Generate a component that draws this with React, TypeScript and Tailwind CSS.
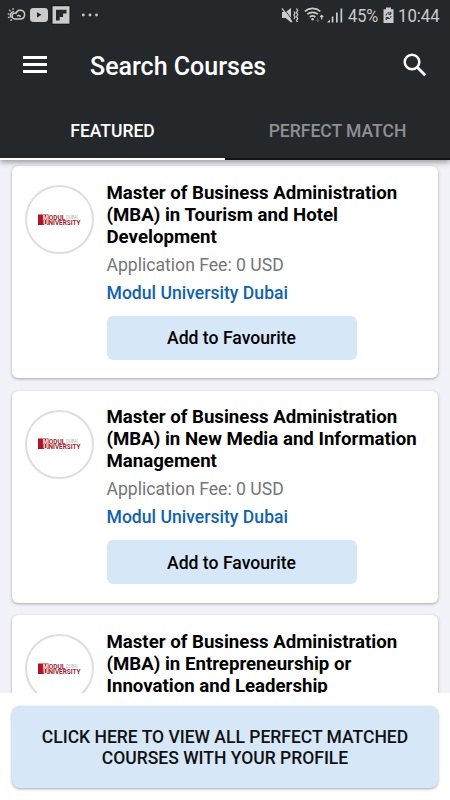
import { useState } from "react";

type Course = {
  id: number;
  title: string[];
  fee: string;
  university: string;
};

const courses: Course[] = [
  {
    id: 1,
    title: ["Master of Business Administration", "(MBA) in Tourism and Hotel", "Development"],
    fee: "0 USD",
    university: "Modul University Dubai",
  },
  {
    id: 2,
    title: ["Master of Business Administration", "(MBA) in New Media and Information", "Management"],
    fee: "0 USD",
    university: "Modul University Dubai",
  },
  {
    id: 3,
    title: ["Master of Business Administration", "(MBA) in Entrepreneurship or", "Innovation and Leadership"],
    fee: "0 USD",
    university: "Modul University Dubai",
  },
];

const tabs = ["FEATURED", "PERFECT MATCH"];

const StatusBar = () => (
  <div className="flex h-8 items-center text-[#c9cbcc]">
    <svg width="110" height="32" viewBox="0 0 110 32" fill="none">
      {/* weather */}
      <g stroke="currentColor" strokeWidth="1.5" strokeLinecap="round">
        <path d="M14.5 19h5.700a4.400 4.400 0 1 0-4.200-5.800 3 3 0 1 0-1.500 5.800" />
        <path d="M17.500 15.800c1-.6 2.200-.4 2.800.6" />
        <path d="M13.300 11.600a3.800 3.800 0 0 0-2.300 5.600" />
        <path d="M13 8.700v.5M9.600 10.400l.4.4M8.300 14h.5M8.600 17.500l.4-.2M11 20.300l.3-.4" />
      </g>
      {/* video */}
      <rect x="30" y="8" width="18" height="14" rx="3.4" fill="currentColor" />
      <path d="M37 12.2v5.2l4.6-2.6z" fill="#24282b" />
      {/* flipboard */}
      <rect x="51.500" y="5.200" width="19" height="19.500" fill="#111416" />
      <rect x="52.500" y="6.200" width="17" height="17.500" fill="currentColor" />
      <path d="M56 9.700h10.500v3.700h-3.400v3.500h-3.400v3.500H56z" fill="#24282b" />
      <circle cx="83.3" cy="15" r="1.4" fill="currentColor" />
      <circle cx="90" cy="15" r="1.4" fill="currentColor" />
      <circle cx="96.5" cy="15" r="1.4" fill="currentColor" />
    </svg>
    <svg className="ml-[170px] shrink-0" width="65" height="32" viewBox="280 0 65 32" fill="none">
      {/* muted */}
      <path d="M282 12h3.600l5.400-4v14.400l-5.400-4.400H282z" fill="currentColor" />
      <path d="M283.300 7.800l9.500 13" stroke="#24282b" strokeWidth=".8" />
      <path d="M282 8.300l10 13.700" stroke="currentColor" strokeWidth="1.300" />
      <path d="M294 11.500l1 1.500-1 2 1 2-1 2M296.500 8.500l1.200 2-1.200 2 1.200 2-1.200 2 1.200 2-1.200 2 1 1.500" stroke="currentColor" strokeWidth="1.300" />
      {/* wifi */}
      <g stroke="currentColor" strokeWidth="1.700">
        <path d="M304.800 11.300a12 12 0 0 1 15.600 0" />
        <path d="M307.300 14.200a8.300 8.300 0 0 1 10.600 0" />
        <path d="M309.800 17a4.400 4.400 0 0 1 5.600 0" />
      </g>
      <circle cx="312.600" cy="19.300" r="1.300" fill="currentColor" />
      <path d="M317.800 18v4M316.500 20.300l1.300 1.500 1.300-1.500" stroke="#686c6f" />
      <path d="M321.700 19.500v-4M320.200 17l1.500-1.700 1.500 1.700" stroke="currentColor" strokeWidth="1.200" />
      {/* signal */}
      <path d="M327 22.500l3-3v3zM331.700 16.500h1.700v6h-1.700zM336 12.500h1.700v10H336zM340.500 8.500h1.700v14h-1.700z" fill="currentColor" />
    </svg>
    <div className="ml-[3px] w-[30px] shrink-0">
      <span className="inline-block origin-left scale-x-[.86] text-[19px] leading-[30px]">45%</span>
    </div>
    <svg className="ml-[5px] shrink-0" width="11" height="32" viewBox="0 0 11 32" fill="none">
      <path d="M3 7.500h5v1.700h2.500V23H.5V9.200H3z" fill="currentColor" />
      <path d="M3 15.500a2.700 2.700 0 0 1 4.500-2M7.800 11.800v2.500H5.500M8 16a2.700 2.700 0 0 1-4.500 2M3.200 20v-2.500h2.300" stroke="#24282b" />
    </svg>
    <div className="ml-[4px] w-[46px] shrink-0">
      <span className="inline-block origin-left scale-x-[.88] text-[19px] leading-[30px]">10:44</span>
    </div>
  </div>
);

const UniversityLogo = () => (
  <div className="flex size-[69px] shrink-0 items-center justify-center rounded-full border-2 border-[#dedede] bg-white">
    <svg width="43" height="12" viewBox="0 0 43 12" fontFamily="Roboto, sans-serif" fontWeight="700">
      <rect width="10.500" height="10.500" y=".5" fill="#b5121f" />
      <text x="5" y="5.500" fontSize="6.500" fill="#fff" textLength="5" lengthAdjust="spacingAndGlyphs">M</text>
      <text x="5.200" y="10.500" fontSize="6.500" fill="#fff" textLength="4.800" lengthAdjust="spacingAndGlyphs">U</text>
      <text x="10.800" y="5.500" fontSize="6.500" fill="#9c1c2c" textLength="16.500" lengthAdjust="spacingAndGlyphs">ODUL</text>
      <text x="28" y="5.300" fontSize="5" fill="#b0abad" fontWeight="400" textLength="12" lengthAdjust="spacingAndGlyphs">DUBAI</text>
      <text x="10.500" y="10.500" fontSize="6.500" fill="#9c1c2c" textLength="32" lengthAdjust="spacingAndGlyphs">NIVERSITY</text>
    </svg>
  </div>
);

const CourseCard = ({ title, fee, university }: Course) => (
  <li className="flex h-[212px] shrink-0 rounded-[6px] bg-white pl-[13px] shadow-[0_1px_3px_rgba(0,0,0,0.32)]">
    <div className="pt-[19px]">
      <UniversityLogo />
    </div>
    <div className="ml-[12.500px] pt-[15.500px]">
      <h2 className="text-[18.650px] leading-[22px] font-bold whitespace-nowrap text-black">
        {title.map((line) => (
          <span key={line} className="block">
            {line}
          </span>
        ))}
      </h2>
      <p className="mt-[7px] text-[17.600px] leading-[21px] text-[#757575]">Application Fee: {fee}</p>
      <p className="mt-[7px] text-[17.600px] leading-[21px] font-medium text-[#0f62b4]">{university}</p>
      <button className="mt-[12px] h-[44px] w-[250px] rounded-[6px] bg-[#d6e7f8] pt-[2px] text-[17.600px] font-medium text-black">
        Add to Favourite
      </button>
    </div>
  </li>
);

export default function App() {
  const [activeTab, setActiveTab] = useState(tabs[0]);

  return (
    <div className="flex h-[800px] w-[450px] flex-col overflow-hidden bg-white font-[Roboto,sans-serif]">
      <header className="z-10 flex h-[160px] shrink-0 flex-col bg-[#24282b] shadow-[0_2px_6px_rgba(0,0,0,0.4)]">
        <StatusBar />
        <div className="flex h-[70px] items-center pr-[23px] pl-[23px]">
          <button className="mb-[5px] flex w-6 flex-col gap-[4px]" aria-label="Menu">
            <span className="h-[3px] w-full bg-white" />
            <span className="h-[3px] w-full bg-white" />
            <span className="h-[3px] w-full bg-white" />
          </button>
          <h1 className="ml-[43px] text-[25px] font-medium text-white">Search Courses</h1>
          <button className="mb-[4px] ml-auto" aria-label="Search">
            <svg width="24" height="24" viewBox="0 0 24 24" fill="none" stroke="#fff" strokeWidth="2.500">
              <circle cx="9" cy="9" r="7.300" />
              <path d="M14.200 14.200l8 8" strokeWidth="2.800" />
            </svg>
          </button>
        </div>
        <div className="grid h-[58px] grid-cols-2">
          {tabs.map((tab) => (
            <button
              key={tab}
              onClick={() => setActiveTab(tab)}
              className={`border-b-2 pt-[3px] text-[17.500px] font-medium ${
                activeTab === tab ? "border-white text-white" : "border-[#111416] text-[#8e9092]"
              }`}
            >
              {tab}
            </button>
          ))}
        </div>
      </header>

      <ul className="flex h-[533px] shrink-0 flex-col gap-[12.500px] overflow-hidden bg-[#f1f1f8] px-[12px] pt-[6px]">
        {courses.map((course) => (
          <CourseCard key={course.id} {...course} />
        ))}
      </ul>

      <footer className="flex-1 bg-white px-[12px] pt-[13px]">
        <button className="h-[82px] w-full rounded-[8px] bg-[#d6e7f8] pt-px text-[17.500px] leading-[21px] font-medium text-[#111] shadow-[0_1px_3px_rgba(0,0,0,0.35)]">
          CLICK HERE TO VIEW ALL PERFECT MATCHED
          <br />
          COURSES WITH YOUR PROFILE
        </button>
      </footer>
    </div>
  );
}
